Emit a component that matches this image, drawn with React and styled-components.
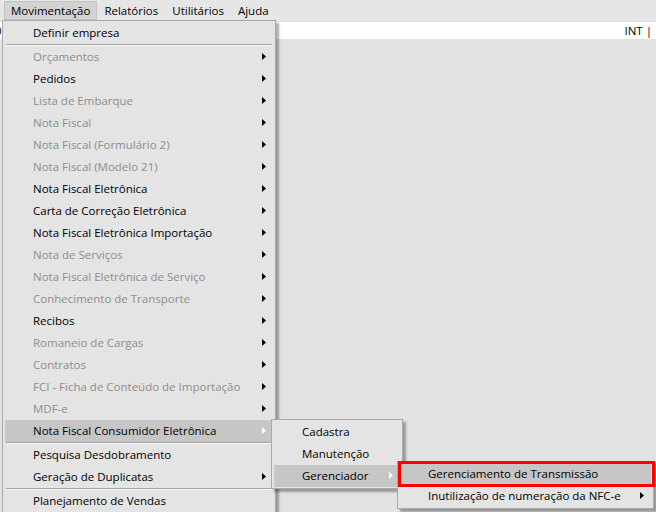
import React from 'react';
import styled, { createGlobalStyle } from 'styled-components';

const Global = createGlobalStyle`
  html, body { margin: 0; padding: 0; }
  body {
    background: #e2e2e2;
    font-family: "Open Sans", "Noto Sans", sans-serif;
    font-size: 11.5px;
    color: #000;
    overflow: hidden;
  }
`;

const Page = styled.div`
  position: relative;
  width: 656px;
  height: 512px;
  overflow: hidden;
  background: #e2e2e2;
`;

const MenuBar = styled.div`
  display: flex;
  height: 21px;
  padding-left: 4px;
  background: #e6e6e6;
  box-sizing: border-box;
`;

const BarItem = styled.div`
  display: flex;
  align-items: center;
  padding: 0 6px;
  margin-top: 1px;
  height: 19px;
  box-sizing: border-box;
  border: 1px solid ${p => (p.$active ? '#c3c3c3' : 'transparent')};
  background: ${p => (p.$active ? '#d3d3d3' : 'transparent')};
`;

const Strip = styled.div`
  display: flex;
  justify-content: space-between;
  align-items: center;
  margin-top: 1px;
  height: 17px;
  background: #fff;
  padding-right: 4px;
`;

const Clip = styled.span`
  margin-left: -5px;
  color: #000;
`;

const Menu = styled.div`
  position: absolute;
  left: ${p => p.$left}px;
  top: ${p => p.$top}px;
  width: ${p => p.$width}px;
  box-sizing: border-box;
  background: #e4e4e4;
  border: 1px solid #a9a9a9;
  padding: 1px 2px;
  box-shadow: 3px 3px 2px rgba(0, 0, 0, 0.32);
`;

const Row = styled.div`
  display: flex;
  align-items: center;
  justify-content: space-between;
  height: 22px;
  padding: 0 7px 1px 28px;
  box-sizing: border-box;
  white-space: nowrap;
  color: ${p => (p.$disabled ? '#8e8e8e' : '#000')};
  background: ${p => (p.$hot ? '#c6c6c6' : 'transparent')};
`;

const Sep = styled.div`
  height: 0;
  margin: 0 1px;
  border-top: 1px solid #a3a3a3;
  border-bottom: 1px solid #fafafa;
`;

const Mark = styled.div`
  position: absolute;
  left: 398px;
  top: 461px;
  width: 257px;
  height: 26px;
  box-sizing: border-box;
  border: 3px solid #ff0000;
`;

const Arrow = ({ light }) => (
  <svg width="4" height="7" viewBox="0 0 4 7">
    <polygon points="0,0 4,3.5 0,7" fill={light ? '#ffffff' : '#000000'} />
  </svg>
);

const mainItems = [
  { t: 'Definir empresa' },
  { sep: true },
  { t: 'Orçamentos', d: true, a: true },
  { t: 'Pedidos', a: true },
  { t: 'Lista de Embarque', d: true, a: true },
  { t: 'Nota Fiscal', d: true, a: true },
  { t: 'Nota Fiscal (Formulário 2)', d: true, a: true },
  { t: 'Nota Fiscal (Modelo 21)', d: true, a: true },
  { t: 'Nota Fiscal Eletrônica', a: true },
  { t: 'Carta de Correção Eletrônica', a: true },
  { t: 'Nota Fiscal Eletrônica Importação', a: true },
  { t: 'Nota de Serviços', d: true, a: true },
  { t: 'Nota Fiscal Eletrônica de Serviço', d: true, a: true },
  { t: 'Conhecimento de Transporte', d: true, a: true },
  { t: 'Recibos', a: true },
  { t: 'Romaneio de Cargas', d: true, a: true },
  { t: 'Contratos', d: true, a: true },
  { t: 'FCI - Ficha de Conteúdo de Importação', d: true, a: true },
  { t: 'MDF-e', d: true, a: true },
  { t: 'Nota Fiscal Consumidor Eletrônica', a: true, hot: true },
  { sep: true },
  { t: 'Pesquisa Desdobramento' },
  { t: 'Geração de Duplicatas', a: true },
  { sep: true },
  { t: 'Planejamento de Vendas' },
];

const subItems = [
  { t: 'Cadastra' },
  { t: 'Manutenção' },
  { t: 'Gerenciador', a: true, hot: true },
];

const sub2Items = [
  { t: 'Gerenciamento de Transmissão', hot: true },
  { t: 'Inutilização de numeração da NFC-e', a: true },
];

const MenuList = ({ items, left, top, width }) => (
  <Menu $left={left} $top={top} $width={width}>
    {items.map((it, i) =>
      it.sep ? (
        <Sep key={i} />
      ) : (
        <Row key={i} $disabled={it.d} $hot={it.hot}>
          <span>{it.t}</span>
          {it.a && <Arrow light={it.hot} />}
        </Row>
      )
    )}
  </Menu>
);

export default function App() {
  return (
    <Page>
      <Global />
      <MenuBar>
        <BarItem $active>Movimentação</BarItem>
        <BarItem>Relatórios</BarItem>
        <BarItem>Utilitários</BarItem>
        <BarItem>Ajuda</BarItem>
      </MenuBar>
      <Strip>
        <Clip>0</Clip>
        <span>INT |</span>
      </Strip>
      <MenuList items={mainItems} left={2} top={20} width={274} />
      <MenuList items={subItems} left={271} top={419} width={132} />
      <MenuList items={sub2Items} left={397} top={461} width={257} />
      <Mark />
    </Page>
  );
}
